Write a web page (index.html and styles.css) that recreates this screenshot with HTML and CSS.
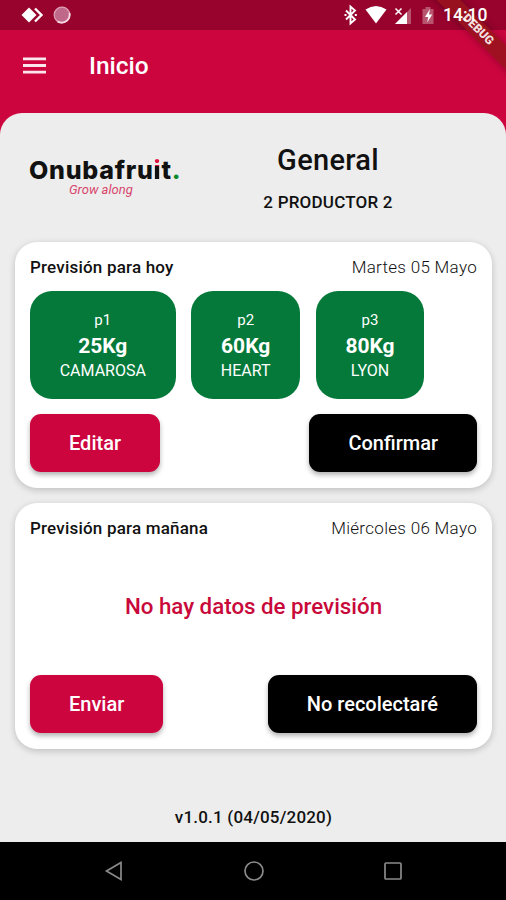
FILE: index.html
```html
<!DOCTYPE html>
<html lang="es">
<head>
    <meta charset="UTF-8">
    <meta name="viewport" content="width=device-width, initial-scale=1.0">
    <title>Inicio</title>
    <link rel="stylesheet" href="styles.css">
</head>
<body>
    <div class="phone">
        <div class="status-bar">
            <svg class="notif" width="56" height="30" viewBox="0 0 56 30">
                <path d="M8 7.5l7.5 7.5L8 22.5.5 15z" fill="#fff"/>
                <path d="M14 8.500l6.500 6.500-6.500 6.500" fill="none" stroke="#fff" stroke-width="2.4"/>
                <circle cx="41" cy="15" r="8.200" fill="#c0688a"/>
                <circle cx="41" cy="15" r="7.800" fill="none" stroke="#dc9fb3" stroke-width="1.200"/>
                <path d="M48.500 13a8 8 0 0 1-12 8.400" fill="none" stroke="#f6dbe4" stroke-width="1.800"/>
            </svg>
            <svg class="system" width="96" height="30" viewBox="0 0 96 30">
                <path d="M3 10.500l9 9-4.500 4v-17l4.500 4-9 9" fill="none" stroke="#fff" stroke-width="1.900"/>
                <path d="M1.500 15h2M11.800 15h2" stroke="#fff" stroke-width="2"/>
                <path d="M22.500 9.500Q33 2.500 43.500 9.500L33 23.500z" fill="#fff"/>
                <path d="M52 24L68 8v16z" fill="#b9546f"/>
                <path d="M52 24L64 12v12z" fill="#fff"/>
                <path d="M52.500 8.500l6 6m0-6l-6 6" stroke="#fff" stroke-width="1.500"/>
                <path d="M79.500 9h3V7h5v2h3v15h-11z" fill="#b9546f"/>
                <path d="M87 9l-5 8h3.200l-1 5.500 5-8H86z" fill="#fff"/>
            </svg>
            <span class="clock">14:10</span>
        </div>
        <div class="debug">DEBUG</div>

        <header class="app-bar">
            <svg class="menu-icon" width="23" height="17" viewBox="0 0 23 17">
                <path d="M0 1.900h23M0 8.500h23M0 15.100h23" stroke="#fff" stroke-opacity=".9" stroke-width="2.900"/>
            </svg>
            <h1>Inicio</h1>
        </header>

        <main>
            <section class="intro">
                <div class="logo">
                    <div class="brand">Onubafru<span class="brand-i">i</span>t<span class="brand-dot">.</span></div>
                    <div class="slogan">Grow along</div>
                </div>
                <div class="producer">
                    <h2>General</h2>
                    <p>2 PRODUCTOR 2</p>
                </div>
            </section>

            <section class="card">
                <div class="card-head">
                    <h3>Previsión para hoy</h3>
                    <span class="date">Martes 05 Mayo</span>
                </div>
                <div class="tiles">
                    <div class="tile">
                        <span>p1</span>
                        <strong>25Kg</strong>
                        <span class="variety">CAMAROSA</span>
                    </div>
                    <div class="tile">
                        <span>p2</span>
                        <strong>60Kg</strong>
                        <span class="variety">HEART</span>
                    </div>
                    <div class="tile">
                        <span>p3</span>
                        <strong>80Kg</strong>
                        <span class="variety">LYON</span>
                    </div>
                </div>
                <div class="actions">
                    <button class="red">Editar</button>
                    <button class="black">Confirmar</button>
                </div>
            </section>

            <section class="card">
                <div class="card-head">
                    <h3>Previsión para mañana</h3>
                    <span class="date">Miércoles 06 Mayo</span>
                </div>
                <p class="empty">No hay datos de previsión</p>
                <div class="actions">
                    <button class="red">Enviar</button>
                    <button class="black">No recolectaré</button>
                </div>
            </section>

            <footer>v1.0.1 (04/05/2020)</footer>
        </main>

        <nav>
            <svg width="24" height="24" viewBox="0 0 24 24"><path d="M19 3.500v17L4.500 12z"/></svg>
            <svg width="24" height="24" viewBox="0 0 24 24"><circle cx="12" cy="12" r="9"/></svg>
            <svg width="24" height="24" viewBox="0 0 24 24"><rect x="4" y="4" width="16" height="16" rx="1"/></svg>
        </nav>
    </div>
</body>
</html>
```
FILE: styles.css
```css
* {
    box-sizing: border-box;
    margin: 0;
    padding: 0;
}

body {
    font-family: Roboto, "Liberation Sans", sans-serif;
    color: #111;
    background: #cd053f;
}

.phone {
    position: relative;
    display: flex;
    flex-direction: column;
    width: 506px;
    height: 900px;
    overflow: hidden;
}

.status-bar {
    display: flex;
    align-items: center;
    height: 30px;
    padding-left: 21px;
    background: #98032d;
    color: #fff;
}

.system {
    margin-left: 266px;
}

.clock {
    position: relative;
    z-index: 2;
    margin-left: 4px;
    font-size: 17.5px;
    font-weight: 500;
    line-height: 32px;
}

/* corner ribbon */
.debug {
    position: absolute;
    top: 21px;
    right: -42px;
    width: 140px;
    height: 17px;
    transform: rotate(45deg);
    background: rgba(150, 20, 28, 0.85);
    box-shadow: 0 0 8px rgba(0, 0, 0, 0.3);
    color: #f3dede;
    font-size: 12px;
    font-weight: 900;
    line-height: 17px;
    text-align: center;
}

.app-bar {
    display: flex;
    align-items: center;
    height: 70px;
    margin-bottom: 13px;
    padding-left: 23px;
}

.app-bar h1 {
    margin-left: 43px;
    color: #fff;
    font-size: 24.5px;
    font-weight: 500;
}

main {
    display: flex;
    flex-direction: column;
    height: 729px;
    padding: 0 14px 0 15px;
    background: #ededed;
    border-radius: 22px 22px 0 0;
}

.intro {
    display: flex;
    height: 129px;
}

.logo {
    width: 157px;
    margin-left: 14px;
    padding-top: 42px;
}

.brand {
    font-family: Inter, sans-serif;
    font-size: 25px;
    font-weight: 800;
    letter-spacing: 0.75px;
    line-height: 30px;
    white-space: nowrap;
}

.brand-i {
    background: linear-gradient(#dc1440 11px, #111 11px);
    -webkit-background-clip: text;
    background-clip: text;
    color: transparent;
}

.brand-dot {
    color: #0a8a28;
}

.slogan {
    margin: -2px 0 0 40px;
    color: #d8456c;
    font-size: 13px;
    font-style: italic;
    line-height: 14px;
}

.producer {
    flex: 1;
    padding: 29px 22px 0 0;
    text-align: center;
}

.producer h2 {
    font-size: 29px;
    font-weight: 500;
    letter-spacing: 0.3px;
    line-height: 36px;
}

.producer p {
    margin-top: 14px;
    font-size: 17px;
    font-weight: 500;
    letter-spacing: 0.2px;
    line-height: 20px;
}

.card {
    display: flex;
    flex-direction: column;
    height: 246px;
    margin-bottom: 15px;
    padding: 15px 15px 16px;
    background: #fff;
    border-radius: 22px;
    box-shadow: 0 2px 7px rgba(0, 0, 0, 0.2);
}

.card-head {
    display: flex;
    justify-content: space-between;
    letter-spacing: 0.2px;
    line-height: 20px;
    font-size: 17px;
}

.card-head h3 {
    font-size: 17px;
    font-weight: 500;
}

.date {
    font-weight: 300;
    letter-spacing: 0.3px;
}

.tiles {
    display: flex;
    gap: 15.5px;
    margin-top: 14px;
}

.tile {
    display: flex;
    flex-direction: column;
    align-items: center;
    height: 108px;
    padding: 19px 29.7px 0;
    background: #04793a;
    border-radius: 22px;
    color: #fff;
    font-size: 15px;
    line-height: 20px;
}

.tile strong {
    font-size: 21px;
    line-height: 32px;
}

.variety {
    font-size: 16px;
    line-height: 18px;
}

.actions {
    display: flex;
    justify-content: space-between;
    margin-top: auto;
}

button {
    height: 58px;
    padding: 0 39px;
    border: none;
    border-radius: 11px;
    box-shadow: 0 3px 5px rgba(0, 0, 0, 0.3);
    color: #fff;
    font-family: inherit;
    font-size: 20px;
    font-weight: 500;
}

.red {
    background: #cd053f;
}

.black {
    background: #000;
}

.empty {
    margin-top: 54px;
    color: #c8093a;
    font-size: 22.3px;
    font-weight: 500;
    line-height: 28px;
    text-align: center;
}

footer {
    margin-top: 42px;
    font-size: 17px;
    font-weight: 500;
    letter-spacing: 0.2px;
    line-height: 22px;
    text-align: center;
}

nav {
    display: flex;
    justify-content: space-between;
    height: 58px;
    padding: 17px 101px 0 102px;
    background: #000;
}

nav svg {
    fill: none;
    stroke: #8a8a8a;
    stroke-width: 1.7;
}
```
